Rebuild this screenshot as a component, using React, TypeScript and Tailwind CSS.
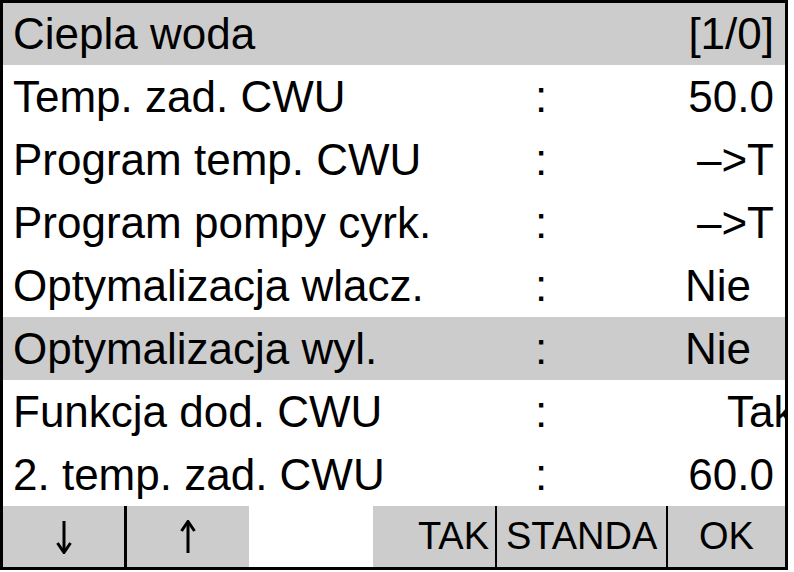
import React from 'react';

type Row = {
  label: string;
  value: string;
  // value either hugs the right edge or starts at a fixed indent
  indent?: string;
  selected?: boolean;
};

const rows: Row[] = [
  { label: 'Temp. zad. CWU', value: '50.0' },
  { label: 'Program temp. CWU', value: '–>T' },
  { label: 'Program pompy cyrk.', value: '–>T' },
  { label: 'Optymalizacja wlacz.', value: 'Nie', indent: 'pl-[125px]' },
  { label: 'Optymalizacja wyl.', value: 'Nie', indent: 'pl-[125px]', selected: true },
  { label: 'Funkcja dod. CWU', value: 'Tak', indent: 'pl-[167px]' },
  { label: '2. temp. zad. CWU', value: '60.0' },
];

const Arrow = ({ up }: { up?: boolean }) => (
  <svg width="16" height="34" viewBox="0 0 16 34" className={up ? 'rotate-180' : ''}>
    <path d="M8 1 V32" stroke="black" strokeWidth="3" fill="none" />
    <path d="M1.5 23 L8 32.5 L14.5 23" stroke="black" strokeWidth="3" fill="none" strokeLinejoin="miter" />
  </svg>
);

export default function App() {
  return (
    <div className="w-[794px] h-[572px] bg-white font-['Liberation_Sans',Arial,sans-serif] text-black">
      <div className="w-[788px] h-[570px] border-[3px] border-black flex flex-col overflow-hidden">
        {/* title bar */}
        <div className="h-[62px] bg-[#cccccc] flex items-center justify-between pl-[10px] pr-[11px] text-[44px] leading-[62px]">
          <span>Ciepla woda</span>
          <span>[1/0]</span>
        </div>

        {/* parameter list */}
        {rows.map((row) => (
          <div
            key={row.label}
            className={`h-[63px] grid grid-cols-[532px_25px_1fr] text-[44px] leading-[63px] ${row.selected ? 'bg-[#cccccc]' : 'bg-white'}`}
          >
            <span className="pl-[10px] whitespace-nowrap overflow-hidden">{row.label}</span>
            <span>:</span>
            <span className={`whitespace-nowrap overflow-hidden ${row.indent ? row.indent : 'text-right pr-[11px]'}`}>
              {row.value}
            </span>
          </div>
        ))}

        {/* soft keys */}
        <div className="h-[61px] flex text-[38px] leading-[61px]">
          <div className="w-[121px] bg-[#cccccc] flex items-center justify-center">
            <Arrow />
          </div>
          <div className="w-[3px] bg-black" />
          <div className="w-[122px] bg-[#cccccc] flex items-center justify-center">
            <Arrow up />
          </div>
          <div className="w-[124px] bg-white" />
          <div className="w-[122px] bg-[#cccccc] text-right pr-[6px]">TAK</div>
          <div className="w-[2px] bg-black" />
          <div className="w-[169px] bg-[#cccccc] pl-[9px] whitespace-nowrap overflow-hidden">STANDA</div>
          <div className="w-[2px] bg-black" />
          <div className="flex-1 bg-[#cccccc] text-center">OK</div>
        </div>
      </div>
    </div>
  );
}
